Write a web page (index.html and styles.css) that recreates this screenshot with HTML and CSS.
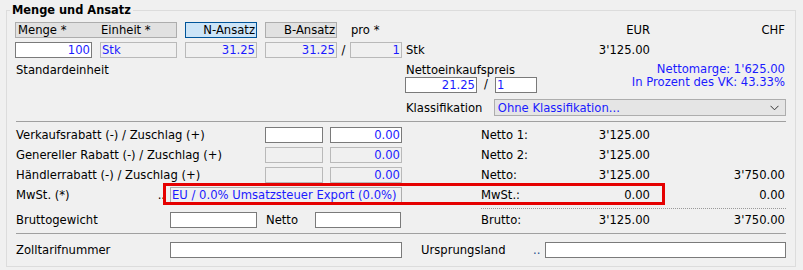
FILE: index.html
```html
<!DOCTYPE html>
<html lang="de">
<head>
<meta charset="utf-8">
<title>Menge und Ansatz</title>
<link rel="stylesheet" href="styles.css">
</head>
<body>
<fieldset class="group">
  <legend class="group-title">Menge und Ansatz</legend>
  <div class="content">

    <div class="row row-a">
      <div class="left">
        <div class="hdr hdr-pair"><span class="hdr-menge">Menge *</span><span>Einheit *</span></div>
        <div class="hdr hdr-active w72 ml8">N-Ansatz</div>
        <div class="hdr w72 ml8">B-Ansatz</div>
        <span class="pro">pro *</span>
      </div>
      <div class="right money">
        <span class="c-eur num">EUR</span>
        <span class="c-chf num">CHF</span>
      </div>
    </div>

    <div class="row row-b">
      <div class="left">
        <div class="field w77 val num">100</div>
        <div class="field dis w77 ml8 val">Stk</div>
        <div class="field dis w72 ml8 val num">31.25</div>
        <div class="field dis w72 ml8 val num">31.25</div>
        <span class="slash">/</span>
        <div class="field dis w52 val num">1</div>
      </div>
      <div class="right money">
        <span class="c-wide txt">Stk</span>
        <span class="c-eur num">3'125.00</span>
      </div>
    </div>

    <div class="row row-c">
      <div class="left"><span class="txt">Standardeinheit</span></div>
      <div class="right einkauf">
        <div class="ek-col">
          <div class="txt">Nettoeinkaufspreis</div>
          <div class="ek-inputs">
            <div class="field w72 val num">21.25</div>
            <span class="slash2">/</span>
            <div class="field w42 val">1</div>
          </div>
        </div>
        <div class="marge">
          <div>Nettomarge: 1'625.00</div>
          <div>In Prozent des VK: 43.33%</div>
        </div>
      </div>
    </div>

    <div class="row row-k">
      <div class="left"></div>
      <div class="right klass">
        <span class="txt k-label">Klassifikation</span>
        <div class="select">
          <span class="val">Ohne Klassifikation...</span>
          <svg class="chev" width="9" height="6" viewBox="0 0 9 6"><polyline points="0.5,0.8 4.5,4.8 8.5,0.8" fill="none" stroke="#333" stroke-width="1"/></svg>
        </div>
      </div>
    </div>

    <div class="sep"></div>

    <div class="row trow first">
      <div class="left">
        <span class="lbl w250">Verkaufsrabatt (-) / Zuschlag (+)</span>
        <div class="field w58"></div>
        <div class="field w72 ml7 val num">0.00</div>
      </div>
      <div class="right money">
        <span class="c-lbl">Netto 1:</span><span class="c-eur num">3'125.00</span>
      </div>
    </div>

    <div class="row trow">
      <div class="left">
        <span class="lbl w250">Genereller Rabatt (-) / Zuschlag (+)</span>
        <div class="field dis w58"></div>
        <div class="field dis w72 ml7 val num">0.00</div>
      </div>
      <div class="right money">
        <span class="c-lbl">Netto 2:</span><span class="c-eur num">3'125.00</span>
      </div>
    </div>

    <div class="row trow">
      <div class="left">
        <span class="lbl w250">Händlerrabatt (-) / Zuschlag (+)</span>
        <div class="field dis w58"></div>
        <div class="field dis w72 ml7 val num">0.00</div>
      </div>
      <div class="right money">
        <span class="c-lbl">Netto:</span><span class="c-eur num">3'125.00</span><span class="c-chf num">3'750.00</span>
      </div>
    </div>

    <div class="row trow mwst">
      <div class="left">
        <span class="lbl w140">MwSt. (*)</span>
        <span class="dots">..</span>
        <div class="field combo w232 val">EU / 0.0% Umsatzsteuer Export (0.0%)</div>
      </div>
      <div class="right money">
        <span class="c-lbl">MwSt.:</span><span class="c-eur num">0.00</span><span class="c-chf num">0.00</span>
      </div>
      <div class="highlight"></div>
    </div>

    <div class="dotrow"><div class="dotline"></div></div>

    <div class="row brutto">
      <div class="left">
        <span class="lbl w155">Bruttogewicht</span>
        <div class="field w87"></div>
        <span class="lbl netto-lbl">Netto</span>
        <div class="field w86"></div>
      </div>
      <div class="right money">
        <span class="c-lbl">Brutto:</span><span class="c-eur num">3'125.00</span><span class="c-chf num">3'750.00</span>
      </div>
    </div>

    <div class="sep sep2"></div>

    <div class="row zoll">
      <div class="left">
        <span class="lbl w155">Zolltarifnummer</span>
        <div class="field w232"></div>
      </div>
      <div class="right land">
        <span class="lbl land-lbl">Ursprungsland</span>
        <span class="dots2">..</span>
        <div class="field w241"></div>
      </div>
    </div>

  </div>
</fieldset>
</body>
</html>
```

FILE: styles.css
```css
* { box-sizing: border-box; }

html, body {
  margin: 0;
  padding: 0;
  background: #f0f0f0;
}

body {
  width: 803px;
  height: 270px;
  overflow: hidden;
  font-family: "DejaVu Sans", Verdana, sans-serif;
  font-size: 11.6px;
  color: #000;
}

.group {
  margin: 3px 0 0 6px;
  width: 790px;
  padding: 0;
  border: 1px solid #dcdcdc;
  min-inline-size: auto;
}

.group-title {
  font-weight: bold;
  font-size: 11.4px;
  line-height: 14px;
  margin-left: 3px;
  padding: 0 2px;
}

.content {
  padding: 5px 9px 8px 8px;
}

.row {
  display: flex;
  height: 16px;
  line-height: 14px;
}

.left {
  width: 390px;
  display: flex;
  align-items: center;
  flex: none;
}

.right {
  width: 381px;
  flex: none;
}

.money {
  display: grid;
  grid-template-columns: 76px 85px 85px 135px;
  align-items: center;
}

.c-wide { grid-column: 1 / 3; padding-left: 1px; }
.c-lbl { grid-column: 2; }
.c-eur { grid-column: 3; padding-right: 1px; }
.c-chf { grid-column: 4; padding-right: 1px; }

.num { text-align: right; }
.val { color: #1a1aff; }

.ml7 { margin-left: 7px; }
.ml8 { margin-left: 8px; }
.w42 { width: 42px; }
.w52 { width: 52px; }
.w58 { width: 58px; }
.w72 { width: 72px; }
.w77 { width: 77px; }
.w86 { width: 86px; }
.w87 { width: 87px; }
.w232 { width: 232px; }
.w241 { width: 241px; }

/* header boxes */
.hdr {
  height: 16px;
  background: #e1e1e1;
  border: 1px solid #adadad;
  padding: 0 1px 0 1px;
  text-align: right;
  white-space: nowrap;
}
.hdr-pair {
  width: 162px;
  display: flex;
  text-align: left;
}
.hdr-menge { width: 84px; padding-left: 1px; }
.hdr-active {
  background: #cce4f7;
  border-color: #005499;
}
.pro { margin-left: 14px; }

/* fields */
.field {
  height: 16px;
  flex: none;
  background: #fff;
  border: 1px solid #7a7a7a;
  padding: 0 1px 0 1px;
  white-space: nowrap;
  overflow: hidden;
}
.field.dis {
  background: #f0f0f0;
  border-color: #b9b9b9;
}
.field.combo {
  background: #f0f0f0;
  border-color: #adadad;
}

.slash { width: 13px; text-align: center; }

.row-b { margin-top: 4px; }

/* Einkauf / Marge block */
.row-c {
  margin-top: 5px;
  height: 30px;
}
.row-c .left { align-items: flex-start; }
.txt { padding-left: 1px; }
.einkauf {
  display: flex;
}
.ek-col { width: 140px; }
.ek-inputs { display: flex; height: 16px; }
.slash2 { width: 18px; text-align: center; }
.marge {
  margin-left: auto;
  margin-top: 0;
  line-height: 13px;
  text-align: right;
  padding-right: 1px;
  color: #1a1aff;
}

.row-k {
  margin-top: 6px;
  height: 17px;
}
.klass {
  display: flex;
  align-items: center;
}
.k-label { width: 89px; }
.select {
  width: 293px;
  height: 17px;
  background: #e5e5e5;
  border: 1px solid #adadad;
  display: flex;
  align-items: center;
  justify-content: space-between;
  padding: 0 6px 0 3px;
}
.chev { display: block; }

.sep {
  margin: 5px 0 0 1px;
  height: 1px;
  background: #a0a0a0;
  width: 770px;
}

.trow { margin-top: 4px; }
.trow.first { margin-top: 5px; }

.lbl {
  padding-left: 1px;
  white-space: nowrap;
  flex: none;
}
.w250 { width: 250px; }
.w140 { width: 140px; }
.w155 { width: 155px; }

.dots {
  width: 15px;
  text-align: right;
  padding-right: 5px;
  flex: none;
}

.mwst { position: relative; }
.highlight {
  position: absolute;
  left: 148px;
  top: -4px;
  width: 502px;
  height: 22px;
  border: 3px solid #e50000;
}

.dotrow {
  margin-top: 5px;
  height: 1px;
  padding-left: 466px;
}
.dotline {
  width: 305px;
  border-top: 1px dotted #9a9a9a;
}

.brutto { margin-top: 3px; }
.netto-lbl { width: 58px; padding-left: 9px; }

.sep2 { margin-top: 5px; }

.zoll { margin-top: 8px; }
.land {
  display: flex;
  align-items: center;
}
.land-lbl { width: 128px; padding-left: 16px; }
.dots2 {
  width: 12px;
  color: #1e4d8c;
  flex: none;
}
```
